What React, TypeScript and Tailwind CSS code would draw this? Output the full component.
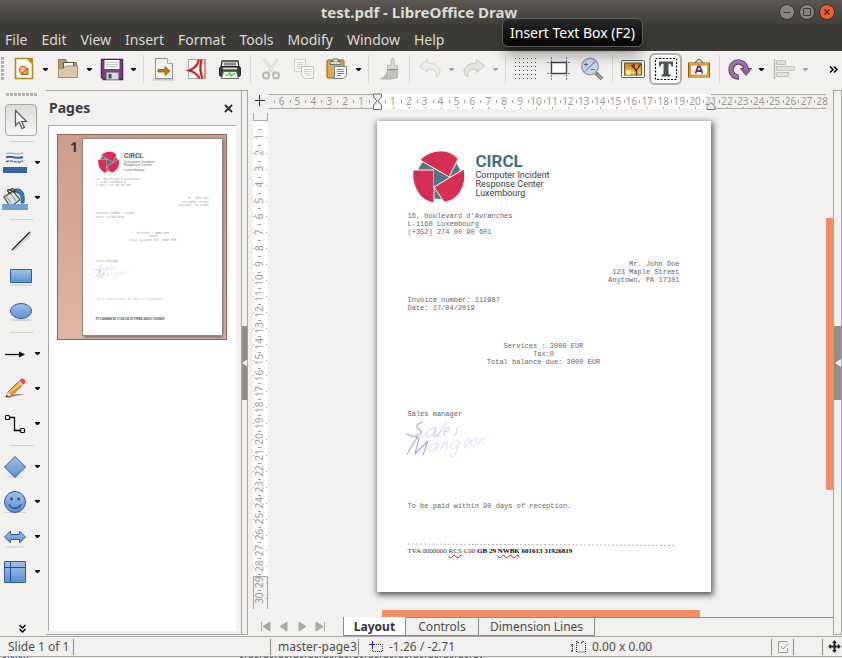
import React from "react";

type Kids = { children?: React.ReactNode };

const PITCH = 334 / 21;

function Svg({ w = 24, h = 24, children }: Kids & { w?: number; h?: number }) {
  return (
    <svg width={w} height={h} viewBox={`0 0 ${w} ${h}`} fill="none" aria-hidden="true" className="block shrink-0">
      {children}
    </svg>
  );
}

/* ---------- Toolbar icons ---------- */

const NewIcon = () => (
  <Svg>
    <path d="M3.5 1.5h12l5 5v15h-17z" fill="#fdfdf8" stroke="#b08a1e" strokeWidth="1.6" />
    <path d="M14 1h7v7z" fill="#b8901c" />
    <circle cx="11" cy="13" r="3.6" fill="#f6b8a4" stroke="#d5643c" strokeWidth="1.4" />
    <path d="M9 17.500 16 11v6.500z" fill="#e8b21e" stroke="#8d6508" />
  </Svg>
);
const OpenIcon = () => (
  <Svg>
    <path d="M2.500 20.500v-18h7l2 3h9v15z" fill="#b59a77" stroke="#8d7455" />
    <path d="M7.500 5.500h10v7h-10z" fill="#fff" stroke="#55504a" />
    <path d="M2.500 20.500v-9h5l2-2.500h12v11.500z" fill="#dcc7a8" stroke="#a58a66" />
  </Svg>
);
const SaveIcon = () => (
  <Svg>
    <path d="M1.500 2.500h21v20h-19l-2-2z" fill="#7b3f8c" stroke="#4b1d5b" strokeWidth="1.400" />
    <path d="M4.500 3h15v9h-15z" fill="#f8f8f8" />
    <path d="M6 5.500h12M6 7.500h12M6 9.500h12" stroke="#c9c9c9" />
    <path d="M6.500 15.500h12v7h-12z" fill="#d8dcd6" stroke="#8c8f8a" />
    <path d="M8.500 17h3v4.500h-3z" fill="#3b4a6b" />
  </Svg>
);
const ExportIcon = () => (
  <Svg>
    <path d="M1 22.500h21" stroke="#c7c5c2" strokeWidth="2" />
    <path d="M3.500 1.500h12l5 5v15h-17z" fill="#f3f3f2" stroke="#8f8f8d" />
    <path d="M15.500 1.500v5h5" fill="#fff" stroke="#a8a8a6" />
    <path d="M6 12.500h7v-3l5 4.500-5 4.500v-3.500H6z" fill="#c17d11" stroke="#8f5902" strokeWidth=".8" />
  </Svg>
);
const PdfIcon = () => (
  <Svg>
    <path d="M3.500 2.500h17v19h-17z" fill="#f7f7f7" stroke="#a3a3a3" />
    <path d="M19.500 3v18" stroke="#d98a8a" />
    <path d="M14 2.500c-1 5-4.500 9-10 11 5 1.500 9 4 10.500 8M16.500 2.500c-1.500 6-1.500 13 1 19" stroke="#cc1f1f" strokeWidth="2.200" />
  </Svg>
);
const PrintIcon = () => (
  <Svg>
    <path d="M4 4h16l1 7H3z" fill="#e9ebe6" stroke="#2e3436" strokeWidth="1.300" />
    <path d="M6 5.500h12v3H6z" fill="#8b8d89" />
    <rect x="1.500" y="9.500" width="21" height="10" rx="2" fill="#3d4143" stroke="#1f2324" />
    <path d="M5 10.500h14v2H5z" fill="#cfd2cc" />
    <path d="M5.500 14.500h13l2 7h-17z" fill="#eef7ea" stroke="#66686a" />
    <path d="m8 19 4-3 1 3 4-3" stroke="#62c146" strokeWidth="1.400" />
  </Svg>
);
const CutIcon = () => (
  <Svg>
    <path d="m5 2 10 14M19 2 9 16" stroke="#cfcecb" strokeWidth="2.600" />
    <path d="m5 2 9.500 13.500M19 2 9.500 15.500" stroke="#f0f0ee" strokeWidth="1.200" />
    <circle cx="7" cy="18.500" r="3" stroke="#b9b8b5" strokeWidth="2" />
    <circle cx="17" cy="18.500" r="3" stroke="#b9b8b5" strokeWidth="2" />
  </Svg>
);
const CopyIcon = () => (
  <Svg>
    <path d="M2.500 2.500h11v12h-11z" fill="#f5f5f4" stroke="#cfcecb" />
    <path d="M5 5.500h6M5 7.500h6M5 9.500h6M5 11.500h4" stroke="#cfcecb" />
    <path d="M9.500 9.500h12v12h-9l-3-3z" fill="#f5f5f4" stroke="#c3c2bf" />
    <path d="M12 12.500h7M12 14.500h7M12 16.500h7M14 18.500h5" stroke="#cfcecb" />
  </Svg>
);
const PasteIcon = () => (
  <Svg>
    <rect x="2" y="3" width="17" height="18" rx="1" fill="#e0a94f" stroke="#8f5f14" />
    <path d="M5 4.500h11v3H5z" fill="#d7d8d5" stroke="#6f716d" />
    <path d="M8 4.500V2h5v2.500" fill="#efefee" stroke="#6f716d" />
    <path d="M9.500 9.500h12v9l-3 3h-9z" fill="#fafafa" stroke="#7c7e7a" />
    <path d="M12 12.500h7M12 14.500h7M12 16.500h7M12 18.500h4" stroke="#83857f" />
  </Svg>
);
const BrushIcon = () => (
  <Svg>
    <path d="M14 2.500c0-2 3-2 3 0v6h3.500v3.500h-10V8.500H14z" fill="#d8d7d4" stroke="#bcbbb8" />
    <path d="M10 13h11v8c-6 2-12 2-19 1 4-1 7-4 8-9z" fill="#b9b8b5" />
    <path d="M12 14v7M15 14v7M18 14v7" stroke="#d9d8d5" />
    <path d="M10 12.500h11" stroke="#8e8d8a" />
  </Svg>
);
const UndoIcon = () => (
  <Svg>
    <path d="m1.500 9 8-6.500V6c8 0 12 4 12.500 8 .2 3-1.500 5-4 6 1.500-5-1.500-8-8.500-8v3.500z" fill="#ecebe9" stroke="#d2d1ce" />
  </Svg>
);
const RedoIcon = () => (
  <Svg>
    <path d="m22.500 9-8-6.500V6c-8 0-12 4-12.500 8-.2 3 1.500 5 4 6-1.500-5 1.500-8 8.500-8v3.500z" fill="#e4e3e1" stroke="#c4c3c0" />
  </Svg>
);
const GridIcon = () => (
  <Svg>
    {[1, 5, 9, 13, 17, 21].map((y) =>
      [1, 5, 9, 13, 17, 21].map((x) => <path key={`${x}-${y}`} d={`M${x} ${y + 0.5}h1`} stroke="#4c4c4c" />)
    )}
  </Svg>
);
const GuidesIcon = () => (
  <Svg>
    <path d="M0 5.500h24M0 16.500h24M4.500 0v23M19.500 0v23" stroke="#64809c" strokeDasharray="2 1" />
    <path d="M4.500 5.500h15v11h-15z" fill="#fff" stroke="#444" strokeWidth="1.400" />
  </Svg>
);
const ZoomIcon = () => (
  <Svg>
    <path d="m16 16 6 6" stroke="#666" strokeWidth="3.600" />
    <path d="m17 17 4.500 4.500" stroke="#bbb" strokeWidth="1.400" />
    <circle cx="10" cy="9.500" r="8.300" fill="#cbd9ea" stroke="#979ea6" strokeWidth="1.400" />
    <path d="m5 14.500 10-10M4 7.500h4M6 5.500v4M11 12.500h4" stroke="#4a6c96" />
  </Svg>
);
const ImageIcon = () => (
  <Svg>
    <defs>
      <linearGradient id="sunset" x1="0" y1="0" x2="0" y2="1">
        <stop stopColor="#cf7d1b" />
        <stop offset="1" stopColor="#ffcf58" />
      </linearGradient>
    </defs>
    <rect x="0.500" y="3.500" width="23" height="17" rx="1" fill="#f1f2ef" stroke="#5c5f5a" />
    <path d="M3.500 6h17v12h-17z" fill="url(#sunset)" stroke="#6b5a2c" />
    <circle cx="7.500" cy="15.500" r="2.500" fill="#fff1a0" />
    <path d="M15.500 18v-5M15.500 14 10.500 8M15.500 13l4-6M13 11V7" stroke="#3a2306" strokeWidth="1.200" />
  </Svg>
);
const TextIcon = () => (
  <Svg>
    <rect x="1.500" y="1.500" width="21" height="21" fill="#fff" stroke="#000" strokeWidth="1.200" strokeDasharray="2 1.500" />
    <path d="M5 4.500h14v5h-1.500c-.3-2-1-3-3-3V16c0 1 .6 1.500 2 1.500V19.500h-9v-2c1.400 0 2-.5 2-1.500V6.500c-2 0-2.700 1-3 3H5z" fill="#4c5354" />
  </Svg>
);
const FontworkIcon = () => (
  <Svg>
    <path d="m8 6 3-3.500h2L16 6" stroke="#777" strokeWidth="1.200" />
    <rect x="1.500" y="6" width="21" height="14" fill="#fff" stroke="#8f5902" />
    <rect x="3" y="7.500" width="18" height="11" fill="#fff" stroke="#e09a2b" strokeWidth="2" />
    <path d="m8.500 16.500 2.500-7h2l2.500 7M10 14h4" stroke="#5c3566" strokeWidth="1.800" />
  </Svg>
);
const RotateIcon = () => (
  <Svg>
    <path d="M11 20A7.500 7.500 0 1 1 18 12" stroke="#6a3f77" strokeWidth="5.500" />
    <path d="M12.500 11.500h11L18 18.500z" fill="#8f6699" stroke="#6a3f77" />
    <path d="M10.500 19.800A7.500 7.500 0 1 1 18 12.500" stroke="#9b72a5" strokeWidth="3.500" />
  </Svg>
);
const AlignIcon = () => (
  <Svg>
    <path d="M2.500 2v20" stroke="#b9b8b5" strokeWidth="1.400" />
    <path d="M4.500 3.500h9v4h-9zM4.500 9.500h18v4h-18zM4.500 15.500h12v4h-12z" fill="#e2e1df" stroke="#c2c1be" />
  </Svg>
);

/* ---------- Drawing tool icons ---------- */

const BlueGradient = () => (
  <svg width="0" height="0" aria-hidden="true" className="absolute">
    <defs>
      <linearGradient id="blue" x1="0" y1="0" x2="0" y2="1">
        <stop stopColor="#a4c1e4" />
        <stop offset="1" stopColor="#5e8fd0" />
      </linearGradient>
    </defs>
  </svg>
);
const CursorIcon = () => (
  <Svg>
    <path d="M6.500 2.500v15l3.500-3.500 3 6.500 2.500-1-3-6h5z" fill="#fff" stroke="#555" strokeWidth="1.200" />
  </Svg>
);
const LineColorIcon = () => (
  <Svg w={26} h={24}>
    <path d="M4 3c5-3 9 2 17-1" stroke="#6c97cf" />
    <path d="M4 6.500c5-3 9 2.500 17-.5" stroke="#3465a4" strokeWidth="2" />
    <path d="M4 11c5-3 9 2 17-1" stroke="#3465a4" strokeWidth="1.400" strokeDasharray="3 1" />
    <path d="M1 16h24v6H1z" fill="#3465a4" />
  </Svg>
);
const FillIcon = () => (
  <Svg w={28} h={24}>
    <path d="M14 3c8-1 10 5 9 14h-3c1-7-1-10-6-11z" fill="#3d7ab5" stroke="#2b5f94" />
    <path d="m3 11 9-6 7 9-7 5H8z" fill="#dcdedb" stroke="#444745" strokeWidth="1.200" />
    <path d="m6 11 4 6M10 8l5 7" stroke="#888a85" />
    <path d="M12 6C7 1 4 5 10 8M9 4c2-3 6 0 4 3" stroke="#333" strokeWidth="1.300" />
    <path d="M1 18h26v6H1z" fill="#729fcf" />
  </Svg>
);
const LineIcon = () => (
  <Svg>
    <path d="m5 22 17-17" stroke="#d3d1ce" strokeWidth="1.500" />
    <path d="m3 21 18-18" stroke="#1c1c1c" strokeWidth="1.200" />
  </Svg>
);
const RectIcon = () => (
  <Svg>
    <path d="M1 21h22" stroke="#dcdad7" strokeWidth="2" />
    <path d="M1.500 5.500h21v13h-21z" fill="url(#blue)" stroke="#2f5c9c" />
  </Svg>
);
const EllipseIcon = () => (
  <Svg>
    <ellipse cx="12" cy="21" rx="11" ry="1" fill="#d6d4d1" />
    <ellipse cx="12" cy="12" rx="10.500" ry="7.500" fill="url(#blue)" stroke="#2f5c9c" />
  </Svg>
);
const ArrowIcon = () => (
  <Svg>
    <path d="M2 12.500h15" stroke="#000" strokeWidth="1.200" />
    <path d="m16 9.500 6 3-6 3z" fill="#000" />
  </Svg>
);
const PencilIcon = () => (
  <Svg>
    <path d="M4 20c6-4 13-3 17-2-5 0-10 1-15 3z" fill="#8d8b88" />
    <path d="m3 20 2-5L16 4l4 4L9 18z" fill="#e9963a" stroke="#a85a16" strokeWidth=".8" />
    <path d="m7 15 11-9" stroke="#fccf84" strokeWidth="1.300" />
    <path d="m3 20 2-5 4 3z" fill="#ead9be" />
    <path d="m2.500 20.500 1-2.500 2 1.500z" fill="#222" />
    <path d="m14.500 5.500 2-2 4.500 4-2 2z" fill="#c7c8c5" />
    <path d="m16.500 3.500 2-2c2-.5 4.500 2 4 4l-2 2z" fill="#e8474a" />
  </Svg>
);
const ConnectorIcon = () => (
  <Svg>
    <path d="M6 5.500h5.500v13H18" stroke="#000" strokeWidth="1.300" />
    <rect x="2.500" y="3.500" width="4" height="4" rx="1" fill="#fff" stroke="#000" strokeWidth="1.200" />
    <rect x="17.500" y="16.500" width="4" height="4" rx="1" fill="#fff" stroke="#000" strokeWidth="1.200" />
  </Svg>
);
const DiamondIcon = () => (
  <Svg>
    <ellipse cx="12" cy="22" rx="9" ry="1.200" fill="#dddbd8" />
    <path d="m12 1.500 10.500 10.500L12 22.500 1.500 12z" fill="url(#blue)" stroke="#2f5c9c" />
  </Svg>
);
const SmileIcon = () => (
  <Svg>
    <path d="M1 22.500h22" stroke="#d8d6d3" />
    <circle cx="12" cy="12" r="10.500" fill="url(#blue)" stroke="#2f5c9c" />
    <circle cx="8.500" cy="9" r="1.400" fill="#204a87" />
    <circle cx="15.500" cy="9" r="1.400" fill="#204a87" />
    <path d="M6 14.500c2 5 10 5 12 0" stroke="#204a87" strokeWidth="1.300" />
  </Svg>
);
const DoubleArrowIcon = () => (
  <Svg>
    <ellipse cx="12" cy="22" rx="10" ry="1" fill="#dddbd8" />
    <path d="m1.500 12 6-6v3.500h9V6l6 6-6 6v-3.500h-9V18z" fill="url(#blue)" stroke="#2f5c9c" />
  </Svg>
);
const FlowchartIcon = () => (
  <Svg>
    <path d="M1.500 1.500h21v21h-21z" fill="url(#blue)" stroke="#2f5c9c" />
    <path d="M1.500 7.500h21M7.500 1.500v21" stroke="#204a87" />
  </Svg>
);

/* ---------- Shared controls ---------- */

function Caret({ label, dim, wide }: { label: string; dim?: boolean; wide?: boolean }) {
  return (
    <button type="button" aria-label={label} className={`flex shrink-0 items-center justify-center ${wide ? "w-[15px]" : "w-[11px]"}`}>
      <svg width="5" height="3" viewBox="0 0 5 3" aria-hidden="true">
        <path d="M0 0h5v1L3 3H2L0 1z" fill={dim ? "#a9a8a5" : "#000"} />
      </svg>
    </button>
  );
}

const Separator = () => (
  <span className="flex w-2 shrink-0 justify-center">
    <span className="h-7 w-px bg-[#dad8d5]" />
  </span>
);

const toolbar: { label: string; icon?: React.ReactNode; menu?: boolean; dim?: boolean; active?: boolean; end?: boolean }[] = [
  { label: "New", icon: <NewIcon />, menu: true },
  { label: "Open", icon: <OpenIcon />, menu: true },
  { label: "Save", icon: <SaveIcon />, menu: true, end: true },
  { label: "Export", icon: <ExportIcon /> },
  { label: "Export as PDF", icon: <PdfIcon /> },
  { label: "Print", icon: <PrintIcon />, end: true },
  { label: "Cut", icon: <CutIcon /> },
  { label: "Copy", icon: <CopyIcon /> },
  { label: "Paste", icon: <PasteIcon />, menu: true, end: true },
  { label: "Clone formatting", icon: <BrushIcon />, end: true },
  { label: "Undo", icon: <UndoIcon />, menu: true, dim: true },
  { label: "Redo", icon: <RedoIcon />, menu: true, dim: true, end: true },
  { label: "Display grid", icon: <GridIcon /> },
  { label: "Helplines while moving", icon: <GuidesIcon /> },
  { label: "Zoom and pan", icon: <ZoomIcon />, end: true },
  { label: "Insert image", icon: <ImageIcon /> },
  { label: "Insert text box", icon: <TextIcon />, active: true },
  { label: "Insert fontwork", icon: <FontworkIcon />, end: true },
  { label: "Transformations", icon: <RotateIcon />, menu: true },
  { label: "Align objects", icon: <AlignIcon />, menu: true, dim: true },
];

const tools: { label: string; icon: React.ReactNode; menu?: boolean; active?: boolean; end?: boolean }[] = [
  { label: "Select", icon: <CursorIcon />, active: true, end: true },
  { label: "Line color", icon: <LineColorIcon />, menu: true },
  { label: "Fill color", icon: <FillIcon />, menu: true, end: true },
  { label: "Line", icon: <LineIcon /> },
  { label: "Rectangle", icon: <RectIcon /> },
  { label: "Ellipse", icon: <EllipseIcon />, end: true },
  { label: "Lines and arrows", icon: <ArrowIcon />, menu: true },
  { label: "Curves", icon: <PencilIcon />, menu: true },
  { label: "Connectors", icon: <ConnectorIcon />, menu: true, end: true },
  { label: "Basic shapes", icon: <DiamondIcon />, menu: true },
  { label: "Symbol shapes", icon: <SmileIcon />, menu: true },
  { label: "Block arrows", icon: <DoubleArrowIcon />, menu: true },
  { label: "Flowchart", icon: <FlowchartIcon />, menu: true },
];

function TitleBar() {
  return (
    <header className="relative shrink-0 bg-[#3c3b37] text-[#dfdbd2]">
      <div className="flex h-6 items-center bg-linear-to-b from-[#5b5750] to-[#403f3a]">
        <h1 className="flex-1 pl-[72px] text-center text-[15px] leading-6 font-bold">test.pdf - LibreOffice Draw</h1>
        <div className="flex w-[76px] justify-center gap-1 pl-[6px]">
          {["minimize", "maximize", "close"].map((name) => (
            <button key={name} type="button" aria-label={name}>
              <svg width="16" height="16" viewBox="0 0 16 16" fill="none" aria-hidden="true">
                <circle cx="8" cy="8" r="7.500" fill={name === "close" ? "#ea5f2d" : "#88857c"} stroke="#33322e" />
                {name === "minimize" && <path d="M4.500 8.500h7" stroke="#3a3935" />}
                {name === "maximize" && <path d="M4.500 4.500h7v7h-7z" stroke="#3a3935" />}
                {name === "close" && <path d="m5.500 5.500 5 5m0-5-5 5" stroke="#4a2413" strokeWidth="1.400" />}
              </svg>
            </button>
          ))}
        </div>
      </div>
      <nav className="flex h-[27px] items-center gap-[14px] px-[5px] pt-1 text-[14px] leading-5">
        {["File", "Edit", "View", "Insert", "Format", "Tools", "Modify", "Window", "Help"].map((m) => (
          <button key={m} type="button">
            {m}
          </button>
        ))}
      </nav>
      <div
        role="tooltip"
        className="absolute top-[18px] left-[502px] z-10 rounded-md border border-[#5f5e5a] bg-linear-to-b from-[#2a2a2a] to-[#050505] px-[7px] text-[14px] leading-[27px] whitespace-nowrap text-white shadow-lg shadow-black/40"
      >
        Insert Text Box (F2)
      </div>
    </header>
  );
}

function Toolbar() {
  return (
    <div role="toolbar" aria-label="Standard" className="flex h-[37px] shrink-0 items-center overflow-hidden pb-px">
      <svg width="7" height="24" viewBox="0 0 7 24" aria-hidden="true" className="shrink-0">
        <path d="M2.500 0v24" stroke="#b3b1ae" strokeWidth="3" strokeDasharray="3 1" />
      </svg>
      {toolbar.map((t) => (
        <React.Fragment key={t.label}>
          <button
            type="button"
            aria-label={t.label}
            className={`flex h-8 w-[33px] shrink-0 items-center justify-center ${t.active ? "rounded-md border-2 border-[#b1afac] bg-white" : ""}`}
          >
            {t.icon}
          </button>
          {t.menu && <Caret label={`${t.label} options`} dim={t.dim} />}
          {t.end && <Separator />}
        </React.Fragment>
      ))}
      <button type="button" aria-label="More" className="ml-auto pr-1">
        <svg width="9" height="7" viewBox="0 0 9 7" fill="none" stroke="#000" strokeWidth="1.500" aria-hidden="true">
          <path d="m1 .5 3 3-3 3M5 .5l3 3-3 3" />
        </svg>
      </button>
    </div>
  );
}

function ToolColumn() {
  return (
    <div role="toolbar" aria-label="Drawing" className="flex w-[46px] shrink-0 flex-col pt-[5px]">
      <svg width="46" height="9" viewBox="0 0 46 9" aria-hidden="true" className="shrink-0">
        <path d="M6 1.500h31" stroke="#b3b1ae" strokeWidth="3" strokeDasharray="3 1" />
      </svg>
      {tools.map((t) => (
        <React.Fragment key={t.label}>
          <div className="flex h-[35px] shrink-0">
            <button type="button" aria-label={t.label} className={`flex items-center justify-center ${t.menu ? "w-[30px]" : "w-[42px]"}`}>
              {t.active ? (
                <span className="flex h-8 w-8 shrink-0 items-center justify-center rounded border border-[#a9a7a4] bg-linear-to-b from-[#dedddb] to-[#f6f6f5]">
                  {t.icon}
                </span>
              ) : (
                t.icon
              )}
            </button>
            {t.menu && <Caret label={`${t.label} options`} wide />}
          </div>
          {t.end && (
            <span className="flex h-2 shrink-0 items-center pl-[10px]">
              <span className="h-px w-6 bg-[#d3d1ce]" />
            </span>
          )}
        </React.Fragment>
      ))}
      <button type="button" aria-label="More tools" className="mt-auto mb-[3px] flex w-[45px] justify-center">
        <svg width="7" height="9" viewBox="0 0 7 9" fill="none" stroke="#000" strokeWidth="1.500" aria-hidden="true">
          <path d="m.5 1 3 3 3-3M.5 5l3 3 3-3" />
        </svg>
      </button>
    </div>
  );
}

/* ---------- Document ---------- */

const LogoShape = () => (
  <>
    <circle cx="26" cy="26" r="22" fill="#55767f" />
    <g fill="#d62f57" stroke="#fff" strokeWidth="1">
      <path d="M7 9C18-3 37-3 45 8L36 26z" />
      <path d="M0 19h21v33C7 50-2 35 0 19z" />
      <path d="M51 18c4 18-8 33-20 33l-10-15z" />
    </g>
    <path d="M21 18.500 35.500 26 21 35z" fill="#55767f" />
  </>
);

const SignatureShape = () => (
  <g fill="none" strokeLinecap="round" strokeWidth=".8">
    <path d="M17 1c-7 3-6 6-2 8 3 2 1 5-4 5M1 13l13 4M13 15 2 33M14 17l-4 16 13-13-5 14" stroke="#aaa2c8" strokeWidth="1.100" />
    <path d="M31 7c-6-2-14 8-8 9 4 0 8-8 8-9l-2 9 4-3M41 2l-9 14M40 11c5-1 6-5 3-5-3 1-7 9-2 9M54 6c-5 2 0 5-5 9" stroke="#c0bbe2" />
    <path d="M32 22c-5-1-11 8-6 8 3 0 7-7 7-8l-2 8M35 29l5-8c3-2 3 2 1 7M53 20c-4-1-10 7-5 8 3 0 7-7 7-8l-5 14c-4 4-7 1-3-1M60 25c5-1 7-7 4-7-3 1-8 9-2 9M72 17c-5 0-9 7-5 8 3 0 6-7 6-8M73 24l4-7c2 2 3 1 6-2" stroke="#d3cff2" />
  </g>
);

function Thumbnail() {
  return (
    <svg viewBox="0 0 334 471" aria-hidden="true" className="block w-full bg-white shadow-[1px_2px_3px_#555] outline outline-[#8d8782]">
      <g transform="translate(36 30)">
        <LogoShape />
      </g>
      <g fontFamily="Roboto, sans-serif">
        <text x="98" y="46" fontSize="17" fontWeight="700" fill="#41646e">
          CIRCL
        </text>
        <g fontSize="9" fill="#777">
          <text x="98" y="57">Computer Incident</text>
          <text x="98" y="66">Response Center</text>
          <text x="98" y="76">Luxembourg</text>
        </g>
      </g>
      <g fontFamily="'Liberation Mono', monospace" fontSize="7" fill="#999">
        <text x="32" y="98">16, boulevard d'Avranches</text>
        <text x="32" y="106">L-1160 Luxembourg</text>
        <text x="32" y="114">(+352) 274 00 90 601</text>
        <g textAnchor="end">
          <text x="302" y="145">Mr. John Doe</text>
          <text x="302" y="153">123 Maple Street</text>
          <text x="302" y="161">Anytown, PA 17101</text>
        </g>
        <text x="32" y="181">Invoice number: 112987</text>
        <text x="32" y="189">Date: 17/04/2019</text>
        <g textAnchor="middle">
          <text x="167" y="228">Services : 3000 EUR</text>
          <text x="167" y="236">Tax:0</text>
          <text x="167" y="244">Total balance due: 3000 EUR</text>
        </g>
        <text x="32" y="295">Sales manager</text>
        <text x="32" y="387" fill="#bbb">
          To be paid within 90 days of reception.
        </text>
      </g>
      <g transform="translate(28 300)">
        <SignatureShape />
      </g>
      <text x="30" y="434" fontFamily="'Liberation Serif', serif" fontSize="7" fontWeight="700" fill="#333">
        TVA 0000000 RCS C00 GB 29 NWBK 601613 31926819
      </text>
    </svg>
  );
}

const misspelt = "underline decoration-[#f00] decoration-wavy decoration-1 underline-offset-1";

function Page() {
  return (
    <article className="mt-2 h-[471px] w-[334px] shrink-0 bg-white px-[31px] pt-[30px] font-['Liberation_Mono',monospace] text-[7px] leading-2 text-[#666] shadow-[1px_2px_6px_1px_#555]">
      <div className="flex gap-[11px] pl-[5px]">
        <svg width="52" height="52" viewBox="0 0 52 52" role="img" aria-label="CIRCL logo">
          <LogoShape />
        </svg>
        <div className="font-[Roboto,sans-serif] text-[9px] leading-[9px] text-[#3c3c3c]">
          <p className="text-[17px] leading-5 font-bold text-[#41707c]">CIRCL</p>
          <p>Computer Incident</p>
          <p>Response Center</p>
          <p>Luxembourg</p>
        </div>
      </div>
      <p className="mt-[9px]">
        16, boulevard d'Avranches
        <br />
        L-1160 Luxembourg
        <br />
        (+352) 274 00 90 601
      </p>
      <p className="mt-6 text-right">
        Mr. John Doe
        <br />
        123 Maple Street
        <br />
        Anytown, PA 17101
      </p>
      <p className="mt-3">
        Invoice number: 112987
        <br />
        Date: 17/04/2019
      </p>
      <p className="mt-[30px] text-center">
        Services : 3000 EUR
        <br />
        Tax:0
        <br />
        Total balance due: 3000 EUR
      </p>
      <p className="mt-11">Sales manager</p>
      <svg width="84" height="38" viewBox="0 0 84 38" role="img" aria-label="Signature" className="mt-[3px] -ml-[3px]">
        <SignatureShape />
      </svg>
      <p className="mt-[43px]">To be paid within 90 days of reception.</p>
      <svg width="266" height="4" viewBox="0 0 266 4" aria-hidden="true" className="mt-[33px]">
        <path d="m0 1 266 1.500" stroke="#b5b5b5" strokeDasharray="2 2" />
      </svg>
      <p className="font-['Liberation_Serif',serif] text-[7px] leading-2 whitespace-nowrap text-[#333]">
        TVA 0000000 <span className={misspelt}>RCS</span> C00{" "}
        <b className="text-black">
          GB 29 <span className={misspelt}>NWBK</span> 601613 31926819
        </b>
      </p>
    </article>
  );
}

/* ---------- Rulers ---------- */

const cm = (from: number, to: number) => Array.from({ length: to - from + 1 }, (_, i) => from + i);

function HorizontalRuler() {
  const zero = 108;
  return (
    <svg width="557" height="18" viewBox="0 0 557 18" aria-hidden="true" className="shrink-0 overflow-visible">
      <path d={`M${zero} 0h334v15H${zero}z`} fill="#fff" />
      <path d="M0 .5h108M0 14.500h108M442 .5h115M442 14.500h115" stroke="#aaa8a5" />
      {cm(-6, 28).map((n) => {
        const x = zero + n * PITCH;
        return (
          <g key={n}>
            <path d={`M${Math.round(x - PITCH / 2)}.5 6v3`} stroke="#a09e9b" />
            {n !== 0 && <path d={`M${Math.round(x)}.5 13v2`} stroke="#aaa8a5" />}
            {n !== 0 && (
              <text x={x} y="11" fontSize="10" textAnchor="middle" fill="#9a9895">
                {Math.abs(n)}
              </text>
            )}
          </g>
        );
      })}
      <path d="M104.500 0h8v3l-3.500 4 3.500 4v4.500h-8V11l3.500-4-3.500-4z" fill="#f2f1f0" stroke="#6f6d6a" />
      <path d="m442 8.500 4 4v3h-8v-3z" fill="#f2f1f0" stroke="#6f6d6a" />
    </svg>
  );
}

function VerticalRuler() {
  const zero = 8;
  return (
    <svg width="15" height="496" viewBox="0 0 15 496" aria-hidden="true" className="ml-[5px] shrink-0">
      <path d={`M0 ${zero}h15v471H0z`} fill="#fff" />
      <path d="M.5 0v7.500h14V0M.5 496V463.500h14V496" stroke="#aaa8a5" fill="#f2f1f0" />
      {cm(1, 30).map((n) => {
        const y = zero + n * PITCH;
        return (
          <g key={n}>
            <path d={`M5 ${Math.round(y - PITCH / 2)}.5h3`} stroke="#a09e9b" />
            <path d={`M0 ${Math.round(y)}.5h1M13 ${Math.round(y)}.5h1`} stroke="#aaa8a5" />
            <text x="0" y="0" transform={`translate(10 ${y}) rotate(-90)`} fontSize="10" textAnchor="middle" fill="#9a9895">
              {n}
            </text>
          </g>
        );
      })}
    </svg>
  );
}

function PanelHandle() {
  return (
    <button type="button" aria-label="Toggle panel" className="mt-[235px] flex h-[74px] w-full items-center justify-center bg-[#918e89]">
      <svg width="6" height="8" viewBox="0 0 6 8" aria-hidden="true">
        <path d="M6 0v8L0 4z" fill="#f2f1f0" />
      </svg>
    </button>
  );
}

function PagesPanel() {
  return (
    <aside className="mt-0.5 mb-px flex w-[202px] shrink-0 border-y border-[#a8a6a3]">
      <div className="flex min-w-0 flex-1 flex-col pr-[5px] pb-[3px] pl-0.5">
        <div className="flex h-[34px] items-center justify-between pr-[3px] pl-px">
          <h2 className="text-[14px] leading-5 font-bold text-[#3c3c3c]">Pages</h2>
          <button type="button" aria-label="Close">
            <svg width="9" height="9" viewBox="0 0 9 9" stroke="#2c2c2c" strokeWidth="1.800" aria-hidden="true">
              <path d="m1 1 7 7m0-7L1 8" />
            </svg>
          </button>
        </div>
        <div className="flex-1 border-t border-l border-[#a8a6a3] bg-white pt-2 pr-[9px] pl-2">
          <div className="flex border border-[#92624f] bg-linear-to-b from-[#cb9d8a] to-[#e3b6a3] py-1 pr-1 pl-3">
            <span className="w-[13px] shrink-0 text-[14px] leading-4 font-bold text-[#3f3a38]">1</span>
            <div className="min-w-0 flex-1">
              <Thumbnail />
            </div>
          </div>
        </div>
      </div>
      <div className="w-[7px] border-x border-[#a8a6a3]">
        <PanelHandle />
      </div>
    </aside>
  );
}

function Editor() {
  return (
    <main className="flex min-w-0 flex-1 flex-col overflow-hidden pt-[6px]">
      <div className="flex h-[19px] shrink-0">
        <svg width="21" height="15" viewBox="0 0 21 15" stroke="#2d2d2d" aria-hidden="true" className="shrink-0">
          <path d="M7 6.500h10M11.500 1v11" />
        </svg>
        <HorizontalRuler />
      </div>
      <div className="flex min-h-0 flex-1 overflow-hidden">
        <VerticalRuler />
        <div className="flex min-w-0 flex-1 flex-col">
          <div className="flex min-h-0 flex-1 justify-center pr-[7px]">
            <Page />
          </div>
          <div className="mr-[126px] ml-[114px] h-[7px] shrink-0 bg-[#f18f68]" />
        </div>
        <div className="flex w-[7px] shrink-0 flex-col pt-[105px]">
          <div className="h-[272px] bg-[#f18f68]" />
        </div>
      </div>
      <div className="flex h-[19px] shrink-0 text-[12px] leading-[17px] text-[#4c4c4c]">
        <div className="flex w-[95px] shrink-0 items-center gap-2 pl-3">
          {["M1.500 1v9M10 1v9L3 5.500z", "M9 1v9L2 5.500z", "M3 1v9l7-4.500z", "M2 1v9l7-4.500zM10.500 1v9"].map((d) => (
            <button key={d} type="button" aria-label="Scroll tabs" className="w-[10px]">
              <svg width="12" height="11" viewBox="0 0 12 11" fill="#aaa8a5" stroke="#aaa8a5" aria-hidden="true">
                <path d={d} />
              </svg>
            </button>
          ))}
        </div>
        <button type="button" className="w-[63px] border-x border-b border-[#8c8a87] bg-white font-bold text-[#333]">
          Layout
        </button>
        <button type="button" className="w-[73px] border border-l-0 border-[#8c8a87]">
          Controls
        </button>
        <button type="button" className="w-[116px] border border-l-0 border-[#8c8a87]">
          Dimension Lines
        </button>
        <span className="flex-1 border-t border-[#8c8a87]" />
      </div>
    </main>
  );
}

function StatusBar() {
  return (
    <footer className="flex h-5 shrink-0 items-center border-t border-[#a8a6a3] text-[12px] leading-4 text-[#4c4c4c]">
      <span className="w-[74px] border-r border-[#8c8a87] pl-2 whitespace-nowrap">Slide 1 of 1</span>
      <span className="h-4 w-[197px] border-r border-[#8c8a87]" />
      <span className="w-[88px] border-r border-[#8c8a87] pl-[7px] whitespace-nowrap">master-page3</span>
      <span className="flex w-[203px] items-center gap-[6px] pl-[10px] whitespace-nowrap">
        <svg width="14" height="12" viewBox="0 0 14 12" fill="none" aria-hidden="true">
          <path d="M0 3.500h6M3.500 0v7" stroke="#1414c8" />
          <path d="M7 3.500h6.500v7h-10V7" stroke="#222" strokeDasharray="1 1" />
        </svg>
        -1.26 / -2.71
      </span>
      <span className="flex flex-1 items-center gap-[6px] pl-[9px] whitespace-nowrap">
        <svg width="15" height="12" viewBox="0 0 15 12" fill="none" aria-hidden="true">
          <path d="M1.500 3v8M5.500 2v9h9V2" stroke="#222" strokeDasharray="1 1" />
          <path d="m5 0 3 2M10 2l3-2M0 4h2M0 10h2" stroke="#111" />
        </svg>
        0.00 x 0.00
      </span>
      <span className="flex h-4 w-[23px] items-center justify-center border-x border-[#8c8a87]">
        <svg width="12" height="12" viewBox="0 0 12 12" fill="none" stroke="#9c9a97" aria-hidden="true">
          <path d="M10.500 7v4.500h-9V.5h9M4 5.500l2 2.500 5-5" />
        </svg>
      </span>
      <span className="flex h-4 w-[29px] border-r border-[#8c8a87]" />
      <span className="flex w-[19px] justify-center pl-1">
        <svg width="13" height="13" viewBox="0 0 13 13" fill="#222" aria-hidden="true">
          <path d="m6.500 0 2.500 3H7.500v2.500H10V4l3 2.500L10 9V7.500H7.500V10H9l-2.500 3L4 10h1.500V7.500H3V9L0 6.500 3 4v1.500h2.500V3H4z" />
        </svg>
      </span>
    </footer>
  );
}

export default function App() {
  return (
    <div className="flex h-screen w-full flex-col overflow-hidden bg-[#f2f1f0] font-['Noto_Sans',sans-serif]">
      <BlueGradient />
      <TitleBar />
      <Toolbar />
      <div className="flex min-h-0 flex-1">
        <ToolColumn />
        <PagesPanel />
        <Editor />
        <div className="mt-0.5 mb-px w-[9px] shrink-0 border border-[#a8a6a3]">
          <PanelHandle />
        </div>
      </div>
      <StatusBar />
      <svg width="100%" height="2" aria-hidden="true" className="shrink-0">
        <path d="M0 .5h2000" stroke="#a8a6a3" />
        <path d="M3 1.500h25" stroke="#35619c" strokeDasharray="3 2 1 2" />
        <path d="M240 1.500h242" stroke="#555" strokeDasharray="3 2 1 3 4 2" />
      </svg>
    </div>
  );
}
